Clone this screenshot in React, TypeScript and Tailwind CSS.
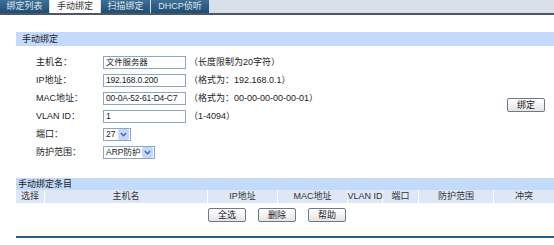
import React from 'react';

const FONT = "font-['Liberation_Sans','Noto_Sans_CJK_SC',sans-serif]";

const tabs = [
  { label: '绑定列表', active: false, w: 'w-[49px]' },
  { label: '手动绑定', active: true, w: 'w-[50px]' },
  { label: '扫描绑定', active: false, w: 'w-[49px]' },
  { label: 'DHCP侦听', active: false, w: 'w-[58px]' },
];

const Chevron = () => (
  <span className="flex h-[11px] w-[11px] shrink-0 items-center justify-center rounded-[2px] bg-[#c6d6f5]">
    <svg width="7" height="5" viewBox="0 0 7 5">
      <path d="M0.8 1 L3.5 3.8 L6.2 1" fill="none" stroke="#3a66c4" strokeWidth="1.4" />
    </svg>
  </span>
);

const Field = ({ value }: { value: string }) => (
  <div className="flex h-[13px] w-[83px] shrink-0 items-center overflow-hidden whitespace-nowrap border border-[#8aa6c6] bg-white pl-[2px] text-[8.5px] leading-none tracking-[-0.2px] text-[#222]">
    {value}
  </div>
);

const Select = ({ value, w }: { value: string; w: string }) => (
  <div className={`flex h-[13px] ${w} shrink-0 items-center justify-between whitespace-nowrap border border-[#8aa6c6] bg-white pl-[2px] pr-px text-[8.5px] leading-none text-[#222]`}>
    <span>{value}</span>
    <Chevron />
  </div>
);

const Btn = ({ label }: { label: string }) => (
  <button className="flex h-[14px] w-[38px] items-center justify-center rounded-[2px] border border-[#6c7a88] bg-[linear-gradient(#ffffff,#e4e4e4)] text-[9px] leading-none text-[#222]">
    {label}
  </button>
);

const rows: { label: string; control: React.ReactNode; hint?: string }[] = [
  { label: '主机名：', control: <Field value="文件服务器" />, hint: '（长度限制为20字符）' },
  { label: 'IP地址：', control: <Field value="192.168.0.200" />, hint: '（格式为：192.168.0.1）' },
  { label: 'MAC地址：', control: <Field value="00-0A-52-61-D4-C7" />, hint: '（格式为：00-00-00-00-00-01）' },
  { label: 'VLAN ID：', control: <Field value="1" />, hint: '（1-4094）' },
  { label: '端口：', control: <Select value="27" w="w-[28px]" /> },
  { label: '防护范围：', control: <Select value="ARP防护" w="w-[52px]" /> },
];

const cols = [
  { label: '选择', w: 'w-[29px]' },
  { label: '主机名', w: 'w-[163px]' },
  { label: 'IP地址', w: 'w-[70px]' },
  { label: 'MAC地址', w: 'w-[70px]' },
  { label: 'VLAN ID', w: 'w-[35px]' },
  { label: '端口', w: 'w-[36px]' },
  { label: '防护范围', w: 'w-[75px]' },
  { label: '冲突', w: 'flex-1' },
];

export default function App() {
  return (
    <div className={`${FONT} h-[245px] w-[554px] overflow-hidden bg-white text-[9px] leading-none text-[#222]`}>
      {/* Tabs */}
      <div className="flex h-[15px] border-b-2 border-[#4d5864] bg-[#d7dfe9]">
        {tabs.map((t) => (
          <div
            key={t.label}
            className={`${t.w} mr-px flex items-center justify-center whitespace-nowrap text-[9px] ${
              t.active
                ? 'bg-white text-[#333]'
                : 'bg-[linear-gradient(#3f6f95,#1f4c72)] text-[#dfe8f0]'
            }`}
          >
            {t.label}
          </div>
        ))}
      </div>

      <div className="ml-[16px] pt-[17px]">
        {/* Section 1 */}
        <div className="flex h-[14px] items-center bg-[#c4dafb] pl-[6px] text-[9px] text-[#222]">手动绑定</div>

        <div className="flex items-center pt-[7px]">
          <div className="flex flex-1 flex-col">
            {rows.map((r) => (
              <div key={r.label} className="flex h-[18px] items-center whitespace-nowrap">
                <div className="w-[87px] shrink-0 pl-[20px]">{r.label}</div>
                {r.control}
                {r.hint && <div className="pl-[3px]">{r.hint}</div>}
              </div>
            ))}
          </div>
          <div className="pr-[9px] pb-[4px]">
            <Btn label="绑定" />
          </div>
        </div>

        {/* Section 2 */}
        <div className="mt-[17px] flex h-[12px] items-center bg-[#c4dafb] pl-[2px] text-[9px]">手动绑定条目</div>
        <div className="flex h-[13px] bg-[#dde7f6]">
          {cols.map((c) => (
            <div
              key={c.label}
              className={`${c.w} flex items-center justify-center whitespace-nowrap border-r border-white text-[9px] text-[#333] last:border-r-0`}
            >
              {c.label}
            </div>
          ))}
        </div>
        <div className="flex justify-center gap-[12px] pt-[5px] pr-[16px]">
          <Btn label="全选" />
          <Btn label="删除" />
          <Btn label="帮助" />
        </div>
        <div className="mt-[14px] h-[2px] bg-[#2b5d82]" />
      </div>
    </div>
  );
}
